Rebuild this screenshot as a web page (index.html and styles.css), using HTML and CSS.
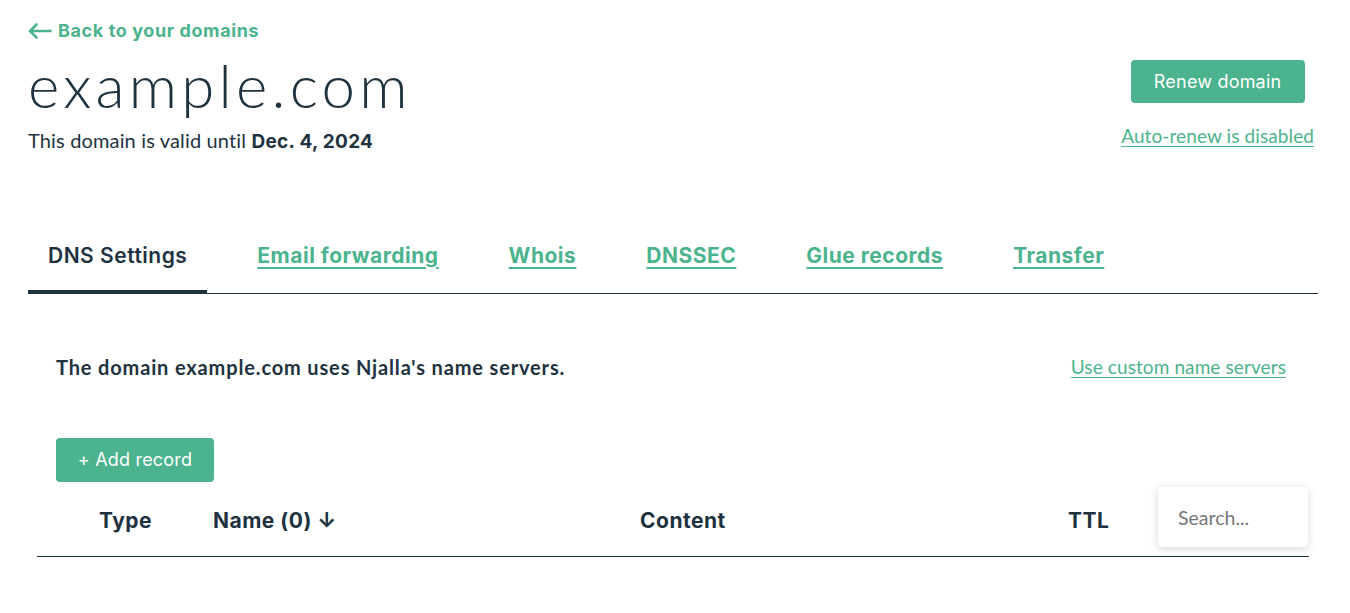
FILE: index.html
```html
<!DOCTYPE html>
<html lang="en">
<head>
<meta charset="utf-8">
<title>example.com</title>
<link rel="stylesheet" href="styles.css">
</head>
<body>
<div class="page">
  <header class="header">
    <div class="header-left">
      <a class="back" href="#">
        <svg class="back-arrow" width="24" height="16" viewBox="0 0 24 16" fill="none" stroke="currentColor" stroke-width="2.6" stroke-linecap="round" stroke-linejoin="round"><path d="M22.5 8H2M8.5 1.5L2 8l6.5 6.5"/></svg>
        <span>Back to your domains</span>
      </a>
      <h1 class="title">example.com</h1>
      <p class="valid">This domain is valid until <strong>Dec. 4, 2024</strong></p>
    </div>
    <div class="header-right">
      <button class="btn btn-renew">Renew domain</button>
      <a class="link" href="#">Auto-renew is disabled</a>
    </div>
  </header>

  <nav class="tabs">
    <span class="tab active">DNS Settings</span>
    <a class="tab" href="#">Email forwarding</a>
    <a class="tab" href="#">Whois</a>
    <a class="tab" href="#">DNSSEC</a>
    <a class="tab" href="#">Glue records</a>
    <a class="tab" href="#">Transfer</a>
  </nav>

  <section class="dns">
    <div class="ns-row">
      <p class="ns-text">The domain example.com uses Njalla's name servers.</p>
      <a class="link" href="#">Use custom name servers</a>
    </div>
    <button class="btn btn-add">+ Add record</button>
    <div class="table-head">
      <div class="th th-type">Type</div>
      <div class="th th-name">Name (0) ↓</div>
      <div class="th th-content">Content</div>
      <div class="th th-ttl">TTL</div>
      <div class="th-search"><input class="search" type="text" placeholder="Search..."></div>
    </div>
  </section>
</div>
</body>
</html>
```

FILE: styles.css
```css
* { box-sizing: border-box; }
html, body { margin: 0; padding: 0; background: #fff; }
body {
  font-family: "Lato", "Noto Sans", sans-serif;
  color: #1e323f;
}
.page {
  padding: 19px 32px 0 28px;
}
.header {
  display: flex;
  justify-content: space-between;
  align-items: flex-start;
}
.header-left { display: flex; flex-direction: column; }
.back {
  display: flex;
  align-items: center;
  gap: 6px;
  color: #4bb38d;
  text-decoration: none;
  font-family: "Inter", sans-serif;
  font-weight: 700;
  font-size: 18px;
  letter-spacing: 0.6px;
  line-height: 24px;
}
.back-arrow { display: block; }
.title {
  margin: 8px 0 0 0;
  font-family: "Lato", sans-serif;
  font-weight: 300;
  font-size: 60px;
  line-height: 68px;
  letter-spacing: 4.2px;
}
.valid {
  margin: 8px 0 0 0;
  font-size: 20px;
  line-height: 26px;
  font-weight: 400;
  letter-spacing: 0.15px;
}
.valid strong {
  font-family: "Inter", sans-serif;
  font-weight: 700;
  font-size: 19px;
  letter-spacing: 0.3px;
}
.header-right {
  display: flex;
  flex-direction: column;
  align-items: center;
  margin-top: 41px;
  margin-right: 4px;
}
.btn {
  border: 0;
  border-radius: 4px;
  background: #4bb38d;
  color: #fff;
  font-family: "Inter", sans-serif;
  font-weight: 400;
  font-size: 18px;
  letter-spacing: 0.2px;
  cursor: pointer;
}
.btn-renew {
  width: 174px;
  height: 43px;
}
.link {
  color: #4bb38d;
  font-size: 19px;
  line-height: 24px;
  letter-spacing: 0.1px;
  text-decoration: underline;
  text-underline-offset: 3px;
  text-decoration-thickness: 1px;
}
.header-right .link { margin-top: 21px; }

.tabs {
  display: flex;
  gap: 30px;
  margin-top: 85px;
  border-bottom: 1.5px solid #1e323f;
}
.tab {
  padding: 2px 20px 20px;
  font-family: "Inter", sans-serif;
  font-weight: 700;
  font-size: 21px;
  letter-spacing: 0.5px;
  line-height: 28px;
  color: #4bb38d;
  text-decoration: underline;
  text-underline-offset: 4px;
  text-decoration-thickness: 2px;
  border-bottom: 4px solid transparent;
  margin-bottom: -1.5px;
}
.tab.active {
  color: #1e323f;
  font-weight: 600;
  text-decoration: none;
  border-bottom-color: #1e323f;
}

.dns {
  padding: 59px 0 0 28px;
}
.ns-row {
  display: flex;
  justify-content: space-between;
  align-items: center;
  padding-right: 32px;
}
.ns-text {
  margin: 0;
  font-size: 20px;
  font-weight: 700;
  line-height: 28px;
  letter-spacing: 0.85px;
}
.btn-add {
  margin-top: 57px;
  width: 158px;
  height: 44px;
}
.table-head {
  display: flex;
  align-items: center;
  margin: 5px 0 0 -19px;
  width: 1272px;
  height: 70px;
  border-bottom: 1.5px solid #1e323f;
}
.th {
  font-family: "Inter", sans-serif;
  font-weight: 700;
  font-size: 21px;
  letter-spacing: 0.5px;
  line-height: 28px;
}
.th-type { margin-left: 62px; width: 114px; }
.th-name { width: 427px; }
.th-content { width: 428px; }
.th-ttl { width: 90px; }
.th-search { margin-top: -8px; }
.search {
  display: block;
  width: 150px;
  height: 60px;
  border: 0;
  border-radius: 4px;
  box-shadow: 0 2px 8px rgba(0, 0, 0, 0.16);
  padding: 0 20px;
  font-family: "Lato", sans-serif;
  font-size: 19.5px;
  color: #1e323f;
  outline: none;
}
.search::placeholder { color: #777; }
```
